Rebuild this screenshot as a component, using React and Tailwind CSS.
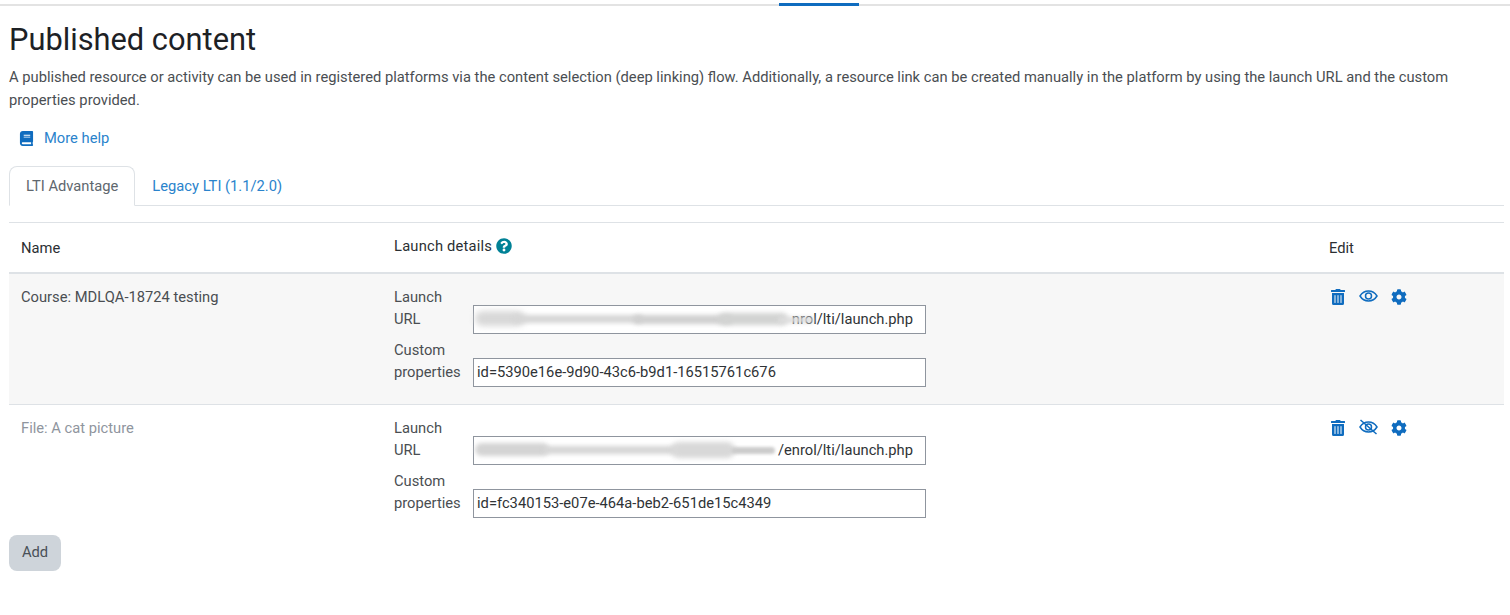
import { FaBook, FaCog, FaQuestionCircle, FaTrashAlt } from "react-icons/fa";

const rows = [
  {
    name: "Course: MDLQA-18724 testing",
    hidden: false,
    url: "nrol/lti/launch.php",
    smear: [
      "left-[2px] top-[6px] w-[50px] h-[15px] bg-[#d8d8d8] blur-[3px]",
      "left-[40px] top-[10px] w-[130px] h-[8px] bg-[#d6d6d6] blur-[2px]",
      "left-[160px] top-[10px] w-[100px] h-[9px] bg-[#d0d0d0] blur-[2px]",
      "left-[245px] top-[8px] w-[70px] h-[12px] bg-[#d2d3d2] blur-[2.5px]",
      "left-[305px] top-[12px] w-[36px] h-[6px] bg-[#dddddd] blur-[2px]",
    ],
    custom: "id=5390e16e-9d90-43c6-b9d1-16515761c676",
  },
  {
    name: "File: A cat picture",
    hidden: true,
    url: "/enrol/lti/launch.php",
    smear: [
      "left-[2px] top-[7px] w-[74px] h-[13px] bg-[#d4d4d4] blur-[2px]",
      "left-[70px] top-[10px] w-[135px] h-[8px] bg-[#d6d6d6] blur-[2px]",
      "left-[198px] top-[6px] w-[64px] h-[16px] bg-[#d8d8d8] blur-[2.5px]",
      "left-[258px] top-[11px] w-[44px] h-[7px] bg-[#cccccc] blur-[1.5px]",
    ],
    custom: "id=fc340153-e07e-464a-beb2-651de15c4349",
  },
];

// the eye in the picture is a thin ring rather than a filled pupil, so it is drawn by hand
function EyeIcon({ slashed }) {
  return (
    <svg viewBox="0 0 19 16" className="w-[19px] h-[16px] shrink-0 mt-[-1px]" fill="none" stroke="currentColor" strokeWidth="1.5">
      <path d="M1 8C3 4.8 6 3 9.5 3s6.500 1.800 8.500 5c-2 3.200-5 5-8.500 5S3 11.200 1 8Z" />
      <circle cx="9.500" cy="8" r="3" />
      {slashed && <path d="M1.500 1l16 14" />}
    </svg>
  );
}

function Field({ label, children }) {
  return (
    <div className="flex items-end mb-2">
      <div className="w-[79px] pr-4">{label}</div>
      <div className="relative w-[453px] h-[29px] mb-[-3px]">{children}</div>
    </div>
  );
}

function Row({ row }) {
  return (
    <div className={`flex border-b border-[#dee2e6] last:border-b-0 h-[131px] last:h-[130px] ${row.hidden ? "" : "bg-[#f7f7f7]"}`}>
      <div className={`w-[373px] px-3 pt-3 ${row.hidden ? "text-[#8f959e]" : ""}`}>{row.name}</div>
      <div className="w-[935px] pl-[12px] pt-3">
        <Field label="Launch URL">
          <input
            readOnly
            value={row.url}
            className="w-full h-full border border-[#8f959e] bg-white pl-[3px] pr-3 text-right text-[#2f3336] outline-none"
          />
          {/* blurred out host name */}
          {row.smear.map((s) => (
            <div key={s} className={`absolute rounded-full ${s}`} />
          ))}
        </Field>
        <Field label="Custom properties">
          <input
            readOnly
            value={row.custom}
            className="w-full h-full border border-[#8f959e] bg-white pl-[3px] text-[#2f3336] outline-none"
          />
        </Field>
      </div>
      <div className="flex items-start gap-[13px] pl-[13px] pt-[15px] text-[#0f6cbf]">
        <FaTrashAlt className="text-[16px] w-[16px]" />
        <EyeIcon slashed={row.hidden} />
        <FaCog className="text-[16px] w-[16px]" />
      </div>
    </div>
  );
}

export default function App() {
  return (
    <div className="h-[615px] bg-white overflow-hidden font-['Roboto',sans-serif] text-[14.72px] leading-[22.5px] text-[#4a4e52]">
      {/* Top nav line */}
      <div className="h-[6px] border-b-2 border-[#e3e3e3] flex justify-center pl-[128px]">
        <div className="w-[80px] h-[3px] mt-[3px] bg-[#0f6cbf]" />
      </div>

      <div className="pl-[9px] pr-[6px]">
        <h2 className="mt-[15px] text-[30.8px] leading-[38px] text-[#1d2125]">Published content</h2>
        <p className="mt-[7px]">
          A published resource or activity can be used in registered platforms via the content selection (deep linking) flow. Additionally, a resource link can be created manually in the platform by using the launch URL and the custom properties provided.
        </p>

        <a className="mt-[16px] ml-[10px] flex items-center gap-[10px] text-[#2a83cc]">
          <FaBook className="text-[15px] text-[#0f6cbf]" />
          More help
        </a>

        {/* Tabs */}
        <div className="mt-[16px] flex border-b border-[#dee2e6] h-[40px]">
          <div className="h-[40px] pl-4 pr-4 pt-2 border border-b-white border-[#dee2e6] rounded-t-lg text-[#60676e] bg-white">LTI Advantage</div>
          <div className="h-[40px] pl-[17px] pt-[9px] text-[#2a83cc]">Legacy LTI (1.1/2.0)</div>
        </div>

        {/* Table */}
        <div className="mt-[16px] border-t border-[#dee2e6]">
          <div className="flex h-[51px] border-b-2 border-[#dee2e6] items-center text-[#2b2f33]">
            <div className="w-[373px] px-3 mt-[3px]">Name</div>
            <div className="w-[935px] pl-3 flex items-center gap-1 mb-[2px]">
              <span className="tracking-[0.2px]">Launch details</span>
              <FaQuestionCircle className="text-[16px] text-[#008196]" />
            </div>
            <div className="pl-[12px] mt-[3px]">Edit</div>
          </div>
          {rows.map((row) => (
            <Row key={row.name} row={row} />
          ))}
        </div>

        <button className="block w-[52px] h-[36px] rounded-lg bg-[#ced4da] text-[#495057]">Add</button>
      </div>
    </div>
  );
}
